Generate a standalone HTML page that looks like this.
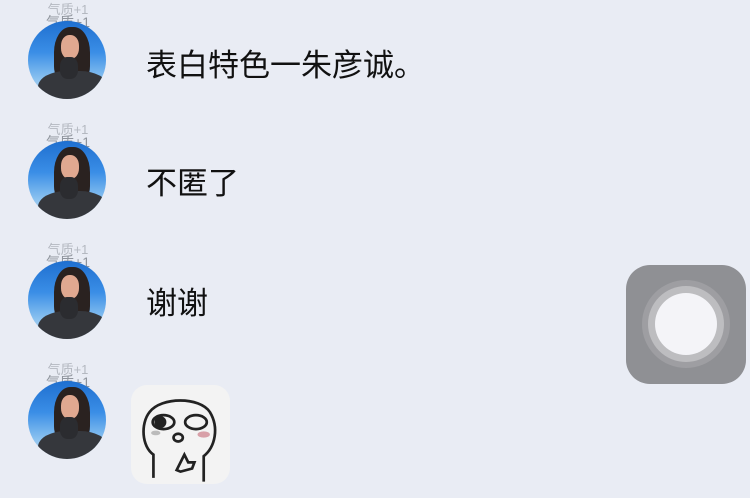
<!DOCTYPE html>
<html><head><meta charset="utf-8"><style>
body{margin:0;width:750px;height:498px;background:#e9ecf4;position:relative;overflow:hidden;font-family:"Liberation Sans","Noto Sans CJK SC",sans-serif}
.av{position:absolute;left:28px;width:78px;height:78px;border-radius:50%;overflow:hidden;background:linear-gradient(#1f6fd0 0%,#3a8ee6 40%,#8cc3f0 75%,#c9d9ea 100%)}
.av .hair{position:absolute;left:26px;top:6px;width:36px;height:56px;border-radius:45% 45% 30% 30%;background:#2a2220}
.av .face{position:absolute;left:33px;top:14px;width:18px;height:24px;border-radius:45%;background:#e0a890}
.av .body{position:absolute;left:10px;top:50px;width:70px;height:40px;border-radius:40% 40% 0 0;background:#35373c}
.av .hand{position:absolute;left:32px;top:36px;width:18px;height:22px;border-radius:40%;background:#2b2c30}
.bd{position:absolute;left:40px;font-size:14px;color:#8f949c;line-height:13px;text-align:center;width:56px}
.bd b{display:block;font-weight:normal;color:#b4b8c0;font-size:13px}
.t{position:absolute;left:146px;font-size:31px;color:#111;line-height:34px;font-family:"Liberation Sans","Noto Sans CJK SC",sans-serif}
.at{position:absolute;left:626px;top:265px;width:120px;height:119px;border-radius:24px;background:#8f9094}
.r1{position:absolute;left:16px;top:15px;width:88px;height:88px;border-radius:50%;background:#9e9ea2}
.r2{position:absolute;left:22px;top:21px;width:76px;height:76px;border-radius:50%;background:#bdbdc0}
.r3{position:absolute;left:29px;top:28px;width:62px;height:62px;border-radius:50%;background:#f4f4f8}
.st{position:absolute;left:131px;top:385px;width:99px;height:99px;border-radius:16px;background:#f3f3f3;overflow:hidden}
</style></head><body>
<div class="bd" style="top:3px"><b>气质+1</b>气质+1</div>
<div class="av" style="top:21px"><div class="hair"></div><div class="face"></div><div class="body"></div><div class="hand"></div></div>
<div class="t" style="top:49px">表白特色一朱彦诚。</div>

<div class="bd" style="top:123px"><b>气质+1</b>气质+1</div>
<div class="av" style="top:141px"><div class="hair"></div><div class="face"></div><div class="body"></div><div class="hand"></div></div>
<div class="t" style="top:167px">不匿了</div>

<div class="bd" style="top:243px"><b>气质+1</b>气质+1</div>
<div class="av" style="top:261px"><div class="hair"></div><div class="face"></div><div class="body"></div><div class="hand"></div></div>
<div class="t" style="top:287px">谢谢</div>

<div class="bd" style="top:363px"><b>气质+1</b>气质+1</div>
<div class="av" style="top:381px"><div class="hair"></div><div class="face"></div><div class="body"></div><div class="hand"></div></div>

<div class="st"><svg width="99" height="99" viewBox="0 0 120 128" fill="none" stroke="#222" stroke-width="3.5">
<path d="M25 120 V90 C10 80 8 50 20 35 C35 15 85 15 98 35 C110 55 105 80 90 92 V125"/>
<ellipse cx="38" cy="48" rx="14" ry="9"/><ellipse cx="80" cy="48" rx="14" ry="9"/>
<ellipse cx="34" cy="48" rx="6" ry="6" fill="#222"/>
<ellipse cx="57" cy="68" rx="6" ry="5"/>
<path d="M55 110 L65 90 L70 100 L78 100 L75 108 L60 112 Z"/>
<ellipse cx="90" cy="64" rx="8" ry="4" fill="#d8a0a8" stroke="none"/>
<ellipse cx="28" cy="62" rx="6" ry="3" fill="#bbb" stroke="none"/>
</svg></div>

<div class="at"><div class="r1"></div><div class="r2"></div><div class="r3"></div></div>
</body></html>
